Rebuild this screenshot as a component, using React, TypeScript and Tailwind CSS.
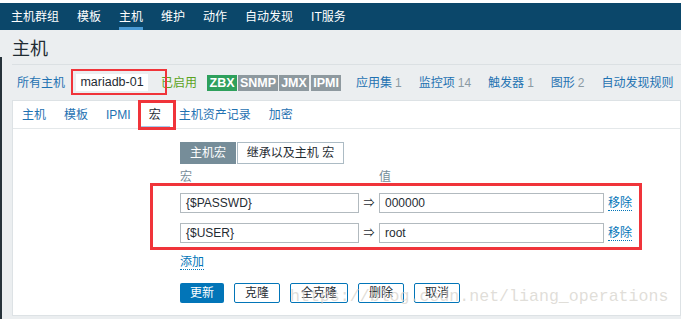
const sans = { fontFamily: '"Liberation Sans", Arial, "Noto Sans CJK SC", sans-serif' };

const navItems = ["主机群组", "模板", "主机", "维护", "动作", "自动发现", "IT服务"];
const tabs = ["主机", "模板", "IPMI", "宏", "主机资产记录", "加密"];
const links: [string, string][] = [
  ["应用集", "1"],
  ["监控项", "14"],
  ["触发器", "1"],
  ["图形", "2"],
  ["自动发现规则", ""],
];
const macros = [
  { name: "{$PASSWD}", value: "000000" },
  { name: "{$USER}", value: "root" },
];
const buttons = ["克隆", "全克隆", "删除", "取消"];

export default function App() {
  return (
    <div className="relative h-[319px] w-[681px] overflow-hidden bg-[#ebeef0] text-[12px] text-[#1f2c33]" style={sans}>
      <div className="h-[3px] bg-white" />
      {/* top menu */}
      <nav className="flex h-[27px] items-stretch gap-[18px] bg-[#0b476a] pl-[11px] text-white">
        {navItems.map((n) => (
          <div key={n} className={`flex items-center ${n === "主机" ? "border-b-[3px] border-[#4a9bd5] pt-[3px]" : ""}`}>
            {n}
          </div>
        ))}
      </nav>

      {/* header */}
      <div className="ml-[12px]">
        <div className="flex h-[35px] items-center border-b border-[#dbe0e3] pt-[4px] text-[18px] leading-none text-[#1f2c33]">主机</div>
        <div className="flex h-[35px] items-center pl-[5px]">
          <span className="text-[#1f72b2]">所有主机</span>
          <span className="ml-[11px] flex h-[17px] w-[72px] items-center justify-center bg-white text-[12.5px]">mariadb-01</span>
          <span className="ml-[13px] text-[#5aa321]">已启用</span>
          <div className="ml-[10px] flex items-center gap-[1px] text-[12.5px] font-bold leading-[16px] text-white">
            <span className="w-[30px] bg-[#2ea05c] text-center">ZBX</span>
            <span className="w-[40px] bg-[#8e999f] text-center">SNMP</span>
            <span className="w-[30px] bg-[#8e999f] text-center">JMX</span>
            <span className="ml-[1px] w-[30px] bg-[#8e999f] text-center">IPMI</span>
          </div>
          <div className="ml-[15px] flex items-center gap-[17px]">
            {links.map(([l, c]) => (
              <span key={l} className="text-[#1f72b2]">
                {l}
                {c && <span className="ml-[3px] text-[#8b9aa3]">{c}</span>}
              </span>
            ))}
          </div>
        </div>

        {/* form panel */}
        <div className="h-[216px] border border-[#dde2e5] bg-white">
          <div className="flex h-[28px] items-stretch border-b border-[#e4e8ea]">
            {tabs.map((t) => (
              <div
                key={t}
                className={`flex items-center px-[9px] ${t === "宏" ? "border-b-[2px] border-[#a5c8ec] pt-[2px] text-[#1f2c33]" : "text-[#1f72b2]"}`}
              >
                {t}
              </div>
            ))}
          </div>

          <div className="pl-[167px]">
            <div className="mt-[13px] flex h-[22px]">
              <span className="flex w-[56px] items-center justify-center bg-[#768d99] text-white">主机宏</span>
              <span className="ml-[1px] flex w-[107px] items-center justify-center border border-[#acbbc4] bg-white">继承以及主机 宏</span>
            </div>
            <div className="mt-[6px] flex h-[14px] items-center text-[#768d99]">
              <span className="w-[199px]">宏</span>
              <span>值</span>
            </div>
            <div className="mt-[9px] flex flex-col gap-[10px]">
              {macros.map((m) => (
                <div key={m.name} className="flex h-[20px] items-center">
                  <div className="flex h-[20px] w-[179px] items-center border border-[#b2babf] px-[5px]">{m.name}</div>
                  <span className="flex w-[20px] justify-center text-[11px]">⇒</span>
                  <div className="flex h-[20px] w-[225px] items-center border border-[#b2babf] px-[5px]">{m.value}</div>
                  <span className="ml-[4px] border-b border-dotted border-[#0275b8] leading-[14px] text-[#0275b8]">移除</span>
                </div>
              ))}
            </div>
            <div className="mt-[12px] flex">
              <span className="border-b border-dotted border-[#0275b8] leading-[14px] text-[#0275b8]">添加</span>
            </div>
            <div className="mt-[13px] flex gap-[10px]">
              <span className="flex h-[20px] w-[44px] items-center justify-center rounded-[2px] bg-[#0275b8] text-white">更新</span>
              {buttons.map((b) => (
                <span
                  key={b}
                  className="flex h-[20px] items-center justify-center rounded-[2px] border border-[#0275b8] bg-white px-[10px] text-[#1f2c33]"
                >
                  {b}
                </span>
              ))}
            </div>
          </div>
        </div>
      </div>

      {/* screenshot artifacts: left edge, annotations, watermark */}
      <div className="absolute left-0 top-[57px] h-[262px] w-[2px] bg-[#26323a]" />
      <div className="absolute left-[71px] top-[69px] h-[26px] w-[96px] border-2 border-[#f0343a]" />
      <div className="absolute left-[138px] top-[100px] h-[30px] w-[38px] border-[3px] border-[#f0343a]" />
      <div className="absolute left-[150px] top-[183px] h-[67px] w-[492px] border-[3px] border-[#f0343a]" />
      <div
        className="pointer-events-none absolute left-[290px] top-[285px] text-[16.6px] text-[#d3cfc8]/70"
        style={{ fontFamily: '"Liberation Mono", "Courier New", monospace' }}
      >
        https://blog.csdn.net/liang_operations
      </div>
    </div>
  );
}
